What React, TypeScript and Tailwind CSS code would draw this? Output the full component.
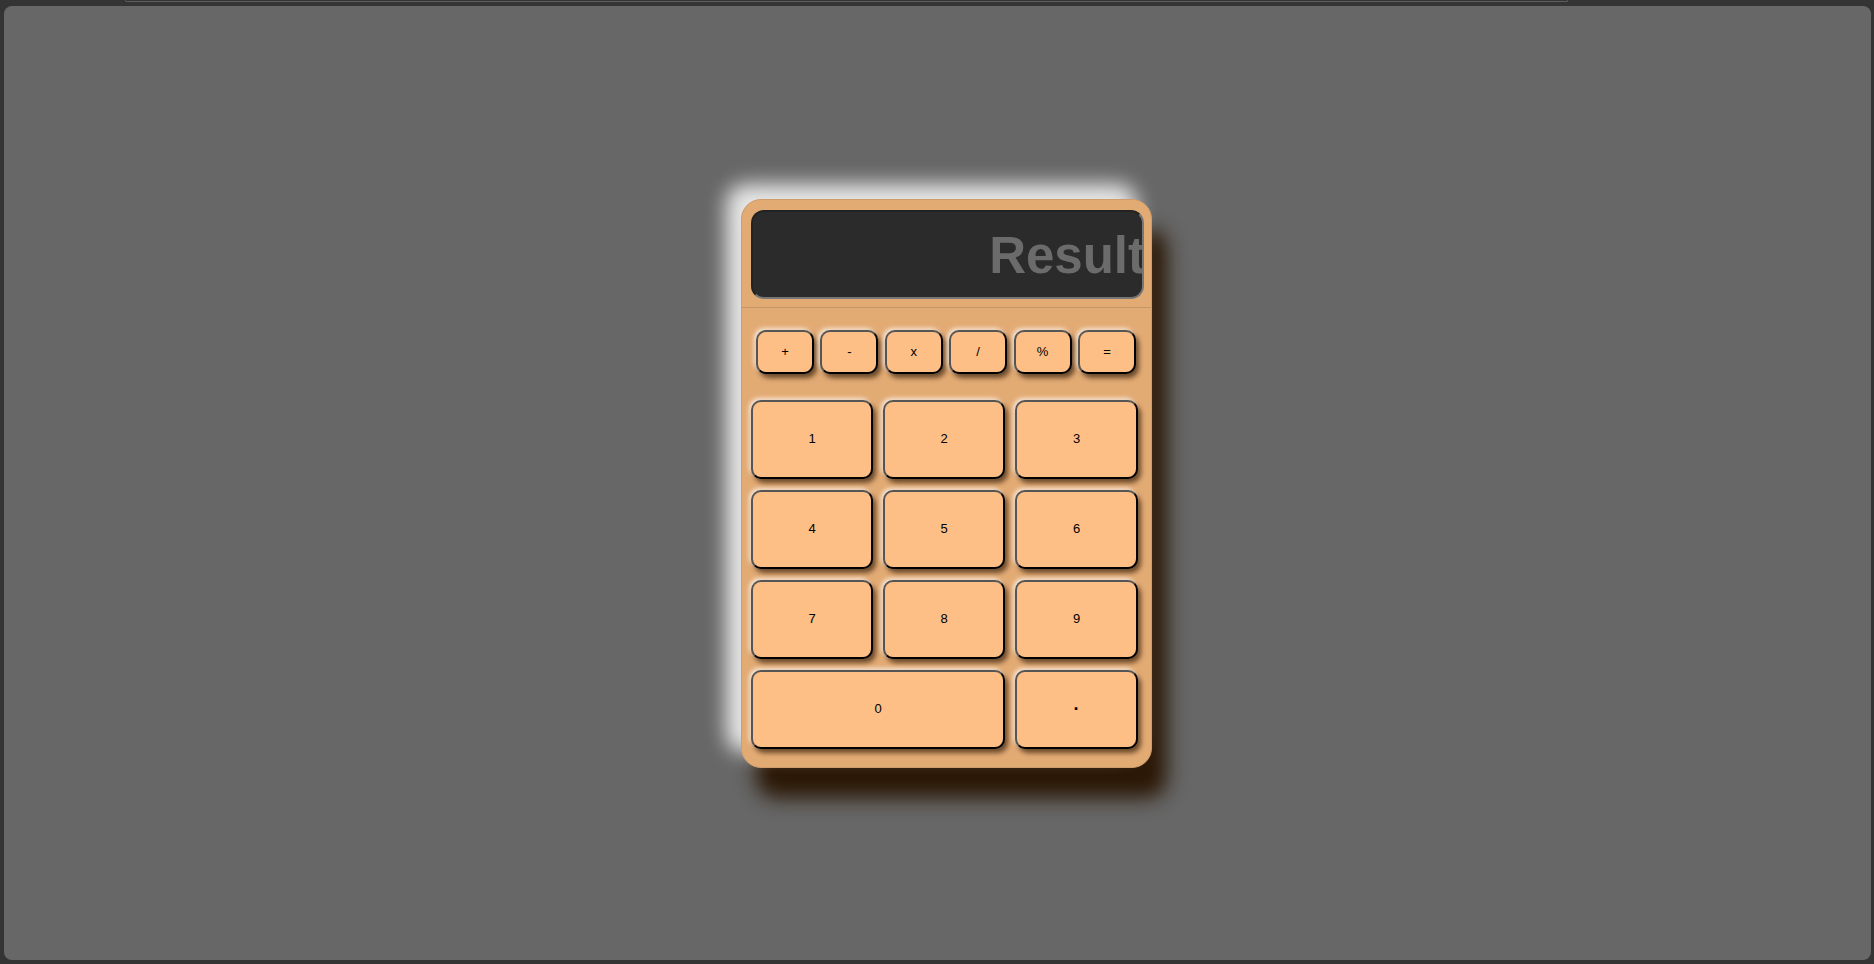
const ops = ["+", "-", "x", "/", "%", "="];
const nums = ["1", "2", "3", "4", "5", "6", "7", "8", "9"];

const keyStyle =
  "flex items-center justify-center rounded-[10px] bg-[#fdbf86] border-2 border-[#555] border-r-black border-b-black text-[13px] text-black shadow-[3px_4px_5px_rgba(40,20,0,0.65),-2px_-2px_4px_rgba(255,255,255,0.7)]";

const Key = ({ label, className }: { label: string; className?: string }) => (
  <button className={`${keyStyle} ${className ?? ""}`}>{label}</button>
);

const App = () => {
  return (
    <div
      className="w-full h-[964px] bg-[#343434] flex flex-col overflow-hidden"
      style={{ fontFamily: '"Liberation Sans", Arial, sans-serif' }}
    >
      <div className="h-[6px]">
        <div className="ml-[125px] w-[1443px] h-[2px] border-b border-x border-[#5e5e5e] rounded-b-[4px]" />
      </div>
      <div className="flex-1 ml-[4px] mr-[3px] mb-[4px] rounded-[8px] bg-[#676767] flex items-center justify-center">
        <div className="ml-[18px] w-[411px] h-[569px] rounded-[20px] bg-[#e3ab74] border border-[#cf9d6c] flex flex-col shadow-[-15px_-15px_20px_rgba(255,255,255,0.85),15px_30px_20px_#2b1806]">
          <div className="pt-[10px] pl-[9px] pb-[8px] border-b border-[#c4946a]">
            <div className="w-[393px] h-[89px] rounded-[13px] bg-[#2b2b2b] border-2 border-[#222] border-r-[#777] border-b-[#777] flex items-center justify-end overflow-hidden">
              <span className="-mr-[3px] mt-[2px] text-[51px] leading-none font-bold text-[#6b6b6b]">
                Result
              </span>
            </div>
          </div>

          <div className="mt-[22px] pl-[14px] flex gap-[6.4px]">
            {ops.map((o) => (
              <Key key={o} label={o} className="w-[58px] h-[44px]" />
            ))}
          </div>

          <div className="mt-[26px] pl-[9px] grid grid-cols-[122px_122px_123px] auto-rows-[79px] gap-x-[10px] gap-y-[11px]">
            {nums.map((n) => (
              <Key key={n} label={n} />
            ))}
            <Key label="0" className="col-span-2" />
            <Key label="·" className="text-[18px] font-bold" />
          </div>
        </div>
      </div>
    </div>
  );
};

export default App;
